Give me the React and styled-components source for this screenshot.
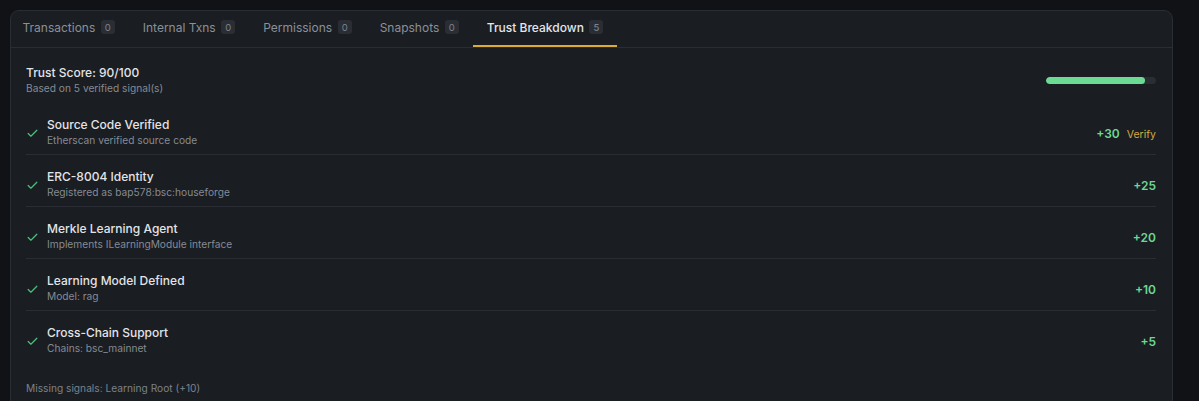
import React from "react"
import styled, { createGlobalStyle } from "styled-components"
import { Check } from "lucide-react"

const GlobalStyle = createGlobalStyle`
  html, body {
    margin: 0;
    padding: 0;
    background: #101215;
    font-family: Inter, "Noto Sans", sans-serif;
    -webkit-font-smoothing: antialiased;
  }
`

const Page = styled.div`
  padding: 10px 26px 0 10px;
  height: 401px;
  box-sizing: border-box;
  overflow: hidden;
`

const Card = styled.div`
  background: #1a1d21;
  border: 1px solid #2a2d33;
  border-radius: 9px;
  min-height: 420px;
`

const TabBar = styled.div`
  display: flex;
  border-bottom: 1px solid #2a2d33;
`

const Tab = styled.div`
  display: flex;
  align-items: center;
  gap: 5.5px;
  height: 36px;
  padding: 0 14px 4px;
  box-sizing: border-box;
  margin-left: ${({ $first }) => ($first ? "-2.5px" : "0")};
  font-size: 12px;
  font-weight: ${({ $active }) => ($active ? 500 : 400)};
  color: ${({ $active }) => ($active ? "#e4e6ea" : "#8a9099")};
  box-shadow: ${({ $active }) => ($active ? "inset 0 -2px 0 #d9ad35" : "none")};
`

const Badge = styled.span`
  display: inline-flex;
  align-items: center;
  justify-content: center;
  min-width: 14px;
  height: 14px;
  padding: 0 3px;
  box-sizing: border-box;
  border-radius: 3px;
  background: #2a2e34;
  color: #7c828b;
  font-size: 9.5px;
`

const Body = styled.div`
  padding: 17px 16px 0 15px;
`

const Header = styled.div`
  display: flex;
  align-items: center;
  justify-content: space-between;
  padding-bottom: 8px;
`

const Title = styled.div`
  font-size: 12px;
  line-height: 16px;
  font-weight: 500;
  color: #e2e4e8;
`

const Sub = styled.div`
  font-size: 10.2px;
  line-height: 14px;
  color: #858b94;
`

const Track = styled.div`
  width: 110px;
  height: 7px;
  border-radius: 4px;
  background: #2a2e34;
  overflow: hidden;
`

const Fill = styled.div`
  height: 100%;
  border-radius: 4px;
  background: #6bdb94;
`

const Row = styled.div`
  display: flex;
  align-items: center;
  gap: 8px;
  padding: 14px 0 7px 0;
  border-bottom: 1px solid ${({ $last }) => ($last ? "transparent" : "#2a2d33")};
`

const Icon = styled.div`
  display: flex;
  color: #4cc07c;
  padding-top: 2px;
`

const RowText = styled.div`
  flex: 1;
`

const Points = styled.span`
  font-size: 12px;
  font-weight: 600;
  color: #6bd894;
`

const Verify = styled.span`
  margin-left: 7px;
  font-size: 10.5px;
  color: #d6a93f;
`

const Missing = styled.div`
  margin-top: 19px;
  font-size: 10.2px;
  color: #7c828b;
`

const tabs = [
  { label: "Transactions", count: 0 },
  { label: "Internal Txns", count: 0 },
  { label: "Permissions", count: 0 },
  { label: "Snapshots", count: 0 },
  { label: "Trust Breakdown", count: 5, active: true },
]

const signals = [
  { title: "Source Code Verified", sub: "Etherscan verified source code", points: 30, verify: true },
  { title: "ERC-8004 Identity", sub: "Registered as bap578:bsc:houseforge", points: 25 },
  { title: "Merkle Learning Agent", sub: "Implements ILearningModule interface", points: 20 },
  { title: "Learning Model Defined", sub: "Model: rag", points: 10 },
  { title: "Cross-Chain Support", sub: "Chains: bsc_mainnet", points: 5 },
]

const App = () => {
  const score = 90
  return (
    <>
      <GlobalStyle />
      <Page>
        <Card>
          <TabBar>
            {tabs.map((t, i) => (
              <Tab key={t.label} $active={t.active} $first={i === 0}>
                {t.label}
                <Badge>{t.count}</Badge>
              </Tab>
            ))}
          </TabBar>
          <Body>
            <Header>
              <div>
                <Title>Trust Score: {score}/100</Title>
                <Sub>Based on {signals.length} verified signal(s)</Sub>
              </div>
              <Track>
                <Fill style={{ width: `${score}%` }} />
              </Track>
            </Header>
            {signals.map((s, i) => (
              <Row key={s.title} $last={i === signals.length - 1}>
                <Icon>
                  <Check size={13} strokeWidth={2.2} />
                </Icon>
                <RowText>
                  <Title>{s.title}</Title>
                  <Sub>{s.sub}</Sub>
                </RowText>
                <div>
                  <Points>+{s.points}</Points>
                  {s.verify && <Verify>Verify</Verify>}
                </div>
              </Row>
            ))}
            <Missing>Missing signals: Learning Root (+10)</Missing>
          </Body>
        </Card>
      </Page>
    </>
  )
}

export default App
